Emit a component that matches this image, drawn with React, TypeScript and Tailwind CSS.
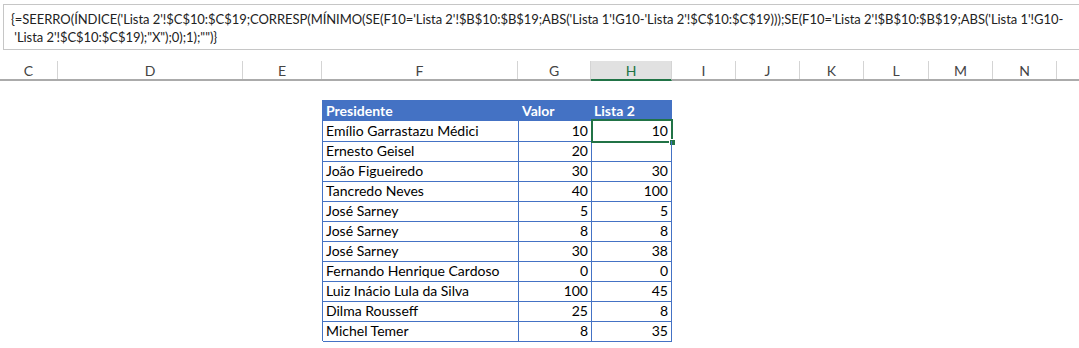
import React from "react";

const cols: { l: string; w: number }[] = [
  { l: "C", w: 58 },
  { l: "D", w: 185 },
  { l: "E", w: 79 },
  { l: "F", w: 196 },
  { l: "G", w: 73 },
  { l: "H", w: 81 },
  { l: "I", w: 64 },
  { l: "J", w: 64 },
  { l: "K", w: 64 },
  { l: "L", w: 65 },
  { l: "M", w: 64 },
  { l: "N", w: 64 },
  { l: "", w: 40 },
];

const rows: [string, string, string][] = [
  ["Emílio Garrastazu Médici", "10", "10"],
  ["Ernesto Geisel", "20", ""],
  ["João Figueiredo", "30", "30"],
  ["Tancredo Neves", "40", "100"],
  ["José Sarney", "5", "5"],
  ["José Sarney", "8", "8"],
  ["José Sarney", "30", "38"],
  ["Fernando Henrique Cardoso", "0", "0"],
  ["Luiz Inácio Lula da Silva", "100", "45"],
  ["Dilma Rousseff", "25", "8"],
  ["Michel Temer", "8", "35"],
];

export default function App() {
  return (
    <div className="w-[1079px] h-[348px] bg-white overflow-hidden font-['Lato',sans-serif] text-[#000]">
      {/* formula bar */}
      <div className="mt-[4px] ml-[3px] h-[46px] border-l border-t border-b border-[#c6c6c6] pl-[7px] pt-[5px] text-[13px] leading-[18px] tracking-[-0.05px] text-[#222] whitespace-pre overflow-hidden">
        <div>{"{=SEERRO(ÍNDICE('Lista 2'!$C$10:$C$19;CORRESP(MÍNIMO(SE(F10='Lista 2'!$B$10:$B$19;ABS('Lista 1'!G10-'Lista 2'!$C$10:$C$19)));SE(F10='Lista 2'!$B$10:$B$19;ABS('Lista 1'!G10-"}</div>
        <div>{" 'Lista 2'!$C$10:$C$19);\"X\");0);1);\"\")}"}</div>
      </div>
      {/* column headers */}
      <div className="mt-[9px] flex h-[22px] border-b-2 border-[#ababab]">
        {cols.map((c) => (
          <div
            key={c.l + c.w}
            style={{ width: c.w }}
            className={
              c.l === "H"
                ? "shrink-0 mt-[2px] flex items-center justify-center text-[14px] text-[#217346] bg-[#e1e1e1] border-b-2 border-[#217346] border-r border-r-[#d4d4d4] -mb-[2px]"
                : "shrink-0 mt-[2px] flex items-center justify-center text-[14px] text-[#444] border-r border-[#d4d4d4]"
            }
          >
            {c.l}
          </div>
        ))}
      </div>
      {/* table */}
      <div className="mt-[19px] ml-[322px] w-[350px] border-l border-t border-[#4472c4] text-[14px]">
        <div className="grid grid-cols-[196px_73px_80px] h-[20px] bg-[#4472c4] text-white font-bold">
          <div className="pl-[3px] leading-[20px]">Presidente</div>
          <div className="pl-[3px] leading-[20px]">Valor</div>
          <div className="pl-[2px] leading-[20px]">Lista 2</div>
        </div>
        {rows.map((r, i) => (
          <div key={i} className="grid grid-cols-[196px_73px_80px] h-[20px]">
            <div className="border-r border-b border-[#4472c4] pl-[3px] leading-[20px]">{r[0]}</div>
            <div className="border-r border-b border-[#4472c4] pr-[3px] text-right leading-[20px]">{r[1]}</div>
            <div className="relative border-r border-b border-[#4472c4] pr-[3px] text-right leading-[20px]">
              {r[2]}
              {i === 0 && (
                <div className="absolute left-[-1px] top-[-2px] right-[-2px] bottom-[-2px] border-2 border-[#217346]">
                  <div className="absolute right-[-5px] bottom-[-5px] w-[7px] h-[7px] bg-[#217346] border border-white" />
                </div>
              )}
            </div>
          </div>
        ))}
      </div>
    </div>
  );
}
